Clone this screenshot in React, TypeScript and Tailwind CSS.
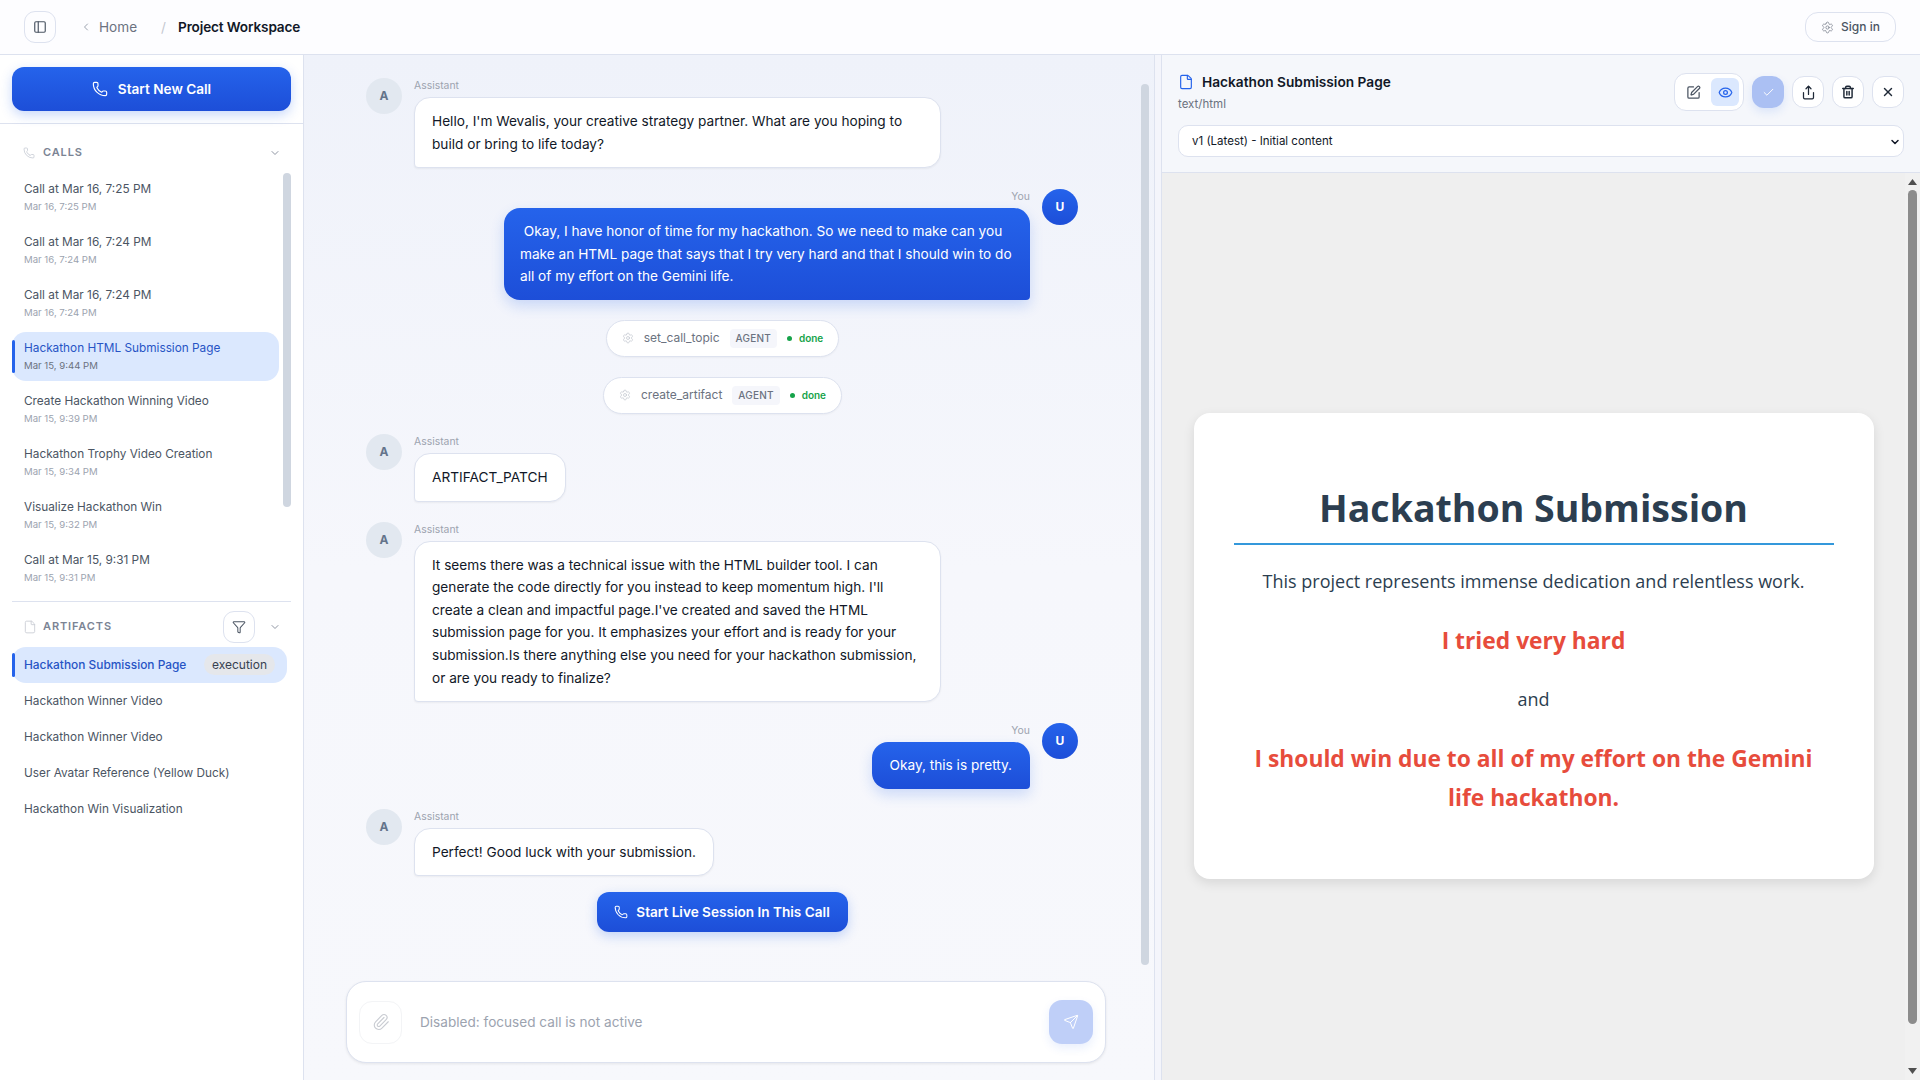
import type { ReactNode } from "react";
import { PanelLeft, ChevronLeft, ChevronDown, Phone, File, Funnel, Settings, Paperclip, Send, SquarePen, Eye, Check, Share, Trash2, X } from "lucide-react";

const calls = [
  ["Call at Mar 16, 7:25 PM", "Mar 16, 7:25 PM"],
  ["Call at Mar 16, 7:24 PM", "Mar 16, 7:24 PM"],
  ["Call at Mar 16, 7:24 PM", "Mar 16, 7:24 PM"],
  ["Hackathon HTML Submission Page", "Mar 15, 9:44 PM", "a"],
  ["Create Hackathon Winning Video", "Mar 15, 9:39 PM"],
  ["Hackathon Trophy Video Creation", "Mar 15, 9:34 PM"],
  ["Visualize Hackathon Win", "Mar 15, 9:32 PM"],
  ["Call at Mar 15, 9:31 PM", "Mar 15, 9:31 PM"],
];
const artifacts = ["Hackathon Winner Video", "Hackathon Winner Video", "User Avatar Reference (Yellow Duck)", "Hackathon Win Visualization"];

function Sidebar() {
  return (
    <aside className="w-[304px] shrink-0 h-full bg-white border-r border-[#dde2ef] flex flex-col">
      <div className="h-[69px] shrink-0 px-3 pt-3 border-b border-[#dde2ef]">
        <button className="w-full h-[44px] rounded-xl bg-gradient-to-b from-[#2563eb] to-[#1d4ed8] text-white text-[13.6px] font-semibold flex items-center justify-center gap-[10px] shadow-[0_4px_12px_rgba(37,99,235,0.25)]">
          <Phone size={16} strokeWidth={1.75} />
          Start New Call
        </button>
      </div>
      <div className="h-[477px] shrink-0 px-3 relative">
        <div className="h-[49px] flex items-center pl-[11px] pr-[10px] pt-[8px]">
          <Phone size={12} strokeWidth={1.5} className="text-[#c2c7d0] mr-[8px]" />
          <span className="text-[11px] font-semibold tracking-[0.08em] text-[#7b8494]">CALLS</span>
          <ChevronDown size={12} className="ml-auto text-[#8f96a3]" />
        </div>
        <div className="w-[267px] flex flex-col">
          {calls.map(([t, d, a], i) => (
            <div key={i} className={`h-[49px] mb-[4px] pl-3 pb-[1px] rounded-[14px] flex flex-col justify-center relative ${a ? "bg-[#dbe8fe]" : ""}`}>
              {a && <span className="absolute left-0 top-[8px] bottom-[8px] w-[3px] bg-[#2563eb] rounded-sm" />}
              <div className={`text-[11.8px] leading-[18px] ${a ? "text-[#2754c5]" : "text-[#4b5563]"}`}>{t}</div>
              <div className={`mt-[1px] text-[9.6px] leading-[16px] ${a ? "text-[#6b7280]" : "text-[#9ca3af]"}`}>{d}</div>
            </div>
          ))}
        </div>
        <div className="absolute right-[12px] top-[49px] w-2 h-[334px] rounded bg-[#cfd6e0]" />
      </div>
      <div className="mx-3 border-t border-[#dde2ef]" />
      <div className="px-3">
        <div className="h-[45px] flex items-center pl-[11px] pr-[10px] pt-[4px]">
          <File size={14} strokeWidth={1.5} className="text-[#c9cdd5] mr-[6px]" />
          <span className="text-[11px] font-semibold tracking-[0.08em] text-[#7b8494]">ARTIFACTS</span>
          <button className="ml-auto mr-[14px] w-8 h-8 rounded-[11px] border border-[#dde2ef] flex items-center justify-center text-[#4b5563]">
            <Funnel size={14} strokeWidth={1.75} />
          </button>
          <ChevronDown size={12} className="text-[#8f96a3]" />
        </div>
        <div className="w-[275px] h-[36px] mb-[1px] rounded-[14px] bg-[#dbe8fe] relative flex items-center pl-3 pr-[12px]">
          <span className="absolute left-0 top-[6px] bottom-[6px] w-[3px] bg-[#2563eb] rounded-sm" />
          <span className="text-[11.9px] font-medium text-[#2754c5]">Hackathon Submission Page</span>
          <span className="ml-auto -mt-[1px] h-[21px] px-2 rounded-full bg-[#e5e7eb] text-[12px] text-[#374151] flex items-center">execution</span>
        </div>
        {artifacts.map((t, i) => (
          <div key={i} className="h-[36px] pl-3 flex items-center text-[11.8px] text-[#4b5563]">{t}</div>
        ))}
      </div>
    </aside>
  );
}

function Avatar({ user }: { user?: boolean }) {
  return user ? (
    <div className="w-9 h-9 rounded-full bg-gradient-to-b from-[#2563eb] to-[#1d4ed8] text-white text-[12px] font-bold flex items-center justify-center shrink-0">U</div>
  ) : (
    <div className="w-9 h-9 rounded-full bg-[#e2e8f0] text-[#64748b] text-[12px] font-bold flex items-center justify-center shrink-0">A</div>
  );
}

function AssistantMsg({ children, w, mt }: { children: ReactNode; w?: string; mt: string }) {
  return (
    <div className={`flex gap-[12px] ${mt}`}>
      <Avatar />
      <div className={`flex flex-col ${w ?? ""}`}>
        <div className="text-[10.4px] leading-[14px] text-[#9ca3af] mb-[4px] mt-[1px]">Assistant</div>
        <div className="self-start w-full bg-white border border-[#dde2ef] rounded-[16px] rounded-bl-[4px] px-[17px] py-[12px] text-[13.65px] leading-[22.6px] text-[#111827] shadow-[0_1px_2px_rgba(0,0,0,0.05)]">
          {children}
        </div>
      </div>
    </div>
  );
}

function UserMsg({ children, w, mt, px }: { children: ReactNode; w?: string; mt: string; px: string }) {
  return (
    <div className={`flex justify-end gap-[12px] ${mt}`}>
      <div className={`flex flex-col items-end ${w ?? ""}`}>
        <div className="text-[10.4px] leading-[14px] text-[#9ca3af] mt-[1px] mb-[4px]">You</div>
        <div className={`bg-gradient-to-b from-[#2563eb] to-[#1d4ed8] text-white rounded-[16px] rounded-br-[4px] ${px} py-[12px] text-[13.65px] leading-[22.6px] shadow-[0_6px_14px_rgba(37,99,235,0.2)]`}>
          {children}
        </div>
      </div>
      <Avatar user />
    </div>
  );
}

function Pill({ name, w, mt }: { name: string; w: string; mt: string }) {
  return (
    <div className={`flex justify-center ${mt} pl-[1px]`}>
      <div className={`${w} h-[37px] bg-white border border-[#dde2ef] rounded-full flex items-center justify-center shadow-[0_1px_2px_rgba(0,0,0,0.04)]`}>
        <Settings size={12} strokeWidth={1.5} className="text-[#c4c8d0] mr-[10px]" />
        <span className="text-[12px] text-[#6b7280] mr-[10px]">{name}</span>
        <span className="h-[19px] px-[6px] rounded bg-[#f5f6fb] text-[10px] font-medium tracking-[0.02em] text-[#6b7280] flex items-center mr-[10px]">AGENT</span>
        <span className="w-[5px] h-[5px] rounded-full bg-[#16a34a] mr-[7px]" />
        <span className="text-[10px] font-semibold text-[#16a34a]">done</span>
      </div>
    </div>
  );
}

function Chat() {
  return (
    <main className="w-[850px] shrink-0 h-full relative flex flex-col bg-gradient-to-b from-[#eff2fa] via-[#f6f7fc] to-[#f7f8fc]">
      <div className="flex-1 pl-[62px] pr-[76px] pt-[23px] min-h-0 overflow-hidden">
        <AssistantMsg w="w-[527px]" mt="">
          Hello, I'm Wevalis, your creative strategy partner. What are you hoping to build or bring to life today?
        </AssistantMsg>
        <UserMsg w="w-[526px]" mt="mt-[21px]" px="px-[16px]">
          <span className="block text-left">&nbsp;Okay, I have honor of time for my hackathon. So we need to make can you make an HTML page that says that I try very hard and that I should win to do all of my effort on the Gemini life.</span>
        </UserMsg>
        <Pill name="set_call_topic" w="w-[233px]" mt="mt-[20px]" />
        <Pill name="create_artifact" w="w-[239px]" mt="mt-[20px]" />
        <AssistantMsg mt="mt-[20px]">ARTIFACT_PATCH</AssistantMsg>
        <AssistantMsg w="w-[527px]" mt="mt-[20px]">
          It seems there was a technical issue with the HTML builder tool. I can generate the code directly for you instead to keep momentum high. I'll create a clean and impactful page.I've created and saved the HTML submission page for you. It emphasizes your effort and is ready for your submission.Is there anything else you need for your hackathon submission, or are you ready to finalize?
        </AssistantMsg>
        <UserMsg mt="mt-[21px]" px="px-[18px]">Okay, this is pretty.</UserMsg>
        <AssistantMsg mt="mt-[20px]">Perfect! Good luck with your submission.</AssistantMsg>
        <div className="flex justify-center mt-[16px]">
          <button className="h-[40px] w-[251px] rounded-xl bg-gradient-to-b from-[#2563eb] to-[#1d4ed8] text-white text-[13.6px] font-semibold flex items-center justify-center gap-2 shadow-[0_4px_12px_rgba(37,99,235,0.25)]">
            <Phone size={14} strokeWidth={1.75} />
            Start Live Session In This Call
          </button>
        </div>
      </div>
      <div className="shrink-0 pl-[42px] pr-[48px] pb-[17px] pt-[10px]">
        <div className="h-[82px] bg-white border border-[#dde2ef] rounded-[20px] flex items-center pl-[12px] pr-[12px] shadow-[0_1px_3px_rgba(0,0,0,0.08)]">
          <button className="w-[43px] h-[43px] rounded-[13px] border border-[#f3f4f6] flex items-center justify-center text-[#c9ccd2]">
            <Paperclip size={18} strokeWidth={1.5} />
          </button>
          <span className="ml-[18px] text-[13.6px] text-[#9ca3af]">Disabled: focused call is not active</span>
          <button className="ml-auto w-[44px] h-[44px] rounded-[13px] bg-[#bfcff8] flex items-center justify-center text-white shadow-[0_4px_10px_rgba(37,99,235,0.1)]">
            <Send size={16} strokeWidth={1.5} />
          </button>
        </div>
      </div>
      <div className="absolute right-[5px] top-[29px] w-2 h-[881px] rounded bg-[#cfd6e0]" />
    </main>
  );
}

function IconBtn({ children }: { children: ReactNode }) {
  return <button className="w-8 h-8 rounded-[12px] bg-white border border-[#dde2ef] flex items-center justify-center text-[#1f2937]">{children}</button>;
}

function ArtifactPanel() {
  return (
    <section className="flex-1 min-w-0 h-full flex flex-col bg-[#f5f7fb] relative">
      <div className="h-[118px] shrink-0 border-b border-[#dde2ef] pl-4 pr-[16px] pt-[17px]">
        <div className="flex items-start justify-between">
          <div>
            <div className="flex items-center gap-[8px]">
              <File size={16} strokeWidth={1.75} className="text-[#2563eb]" />
              <span className="text-[13.7px] font-semibold text-[#111827] leading-[20px]">Hackathon Submission Page</span>
            </div>
            <div className="text-[11.5px] leading-[16px] text-[#6b7280] mt-[4px]">text/html</div>
          </div>
          <div className="flex items-center gap-2 mt-[1px]">
            <div className="h-[38px] w-[70px] justify-between pl-[4px] pr-[4px] bg-white border border-[#dde2ef] rounded-[12px] flex items-center">
              <div className="w-[28px] h-[28px] flex items-center justify-center text-[#4b5563]"><SquarePen size={15} /></div>
              <div className="w-[28px] h-[28px] rounded-md bg-[#dbe8fe] flex items-center justify-center text-[#2563eb]"><Eye size={15} /></div>
            </div>
            <button className="w-8 h-8 rounded-[12px] bg-[#abc0f3] flex items-center justify-center text-white shadow-[0_4px_10px_rgba(37,99,235,0.12)]"><Check size={13} strokeWidth={1.75} /></button>
            <IconBtn><Share size={15} /></IconBtn>
            <IconBtn><Trash2 size={14} strokeWidth={2.5} /></IconBtn>
            <IconBtn><X size={14} strokeWidth={2.5} /></IconBtn>
          </div>
        </div>
        <div className="mt-[13px] h-[32px] bg-white border border-[#dde2ef] rounded-[10px] flex items-center pl-[13px] pr-[2px] pt-[1px] text-[11.5px] text-[#111827]">
          v1 (Latest) - Initial content
          <ChevronDown size={12} strokeWidth={3} className="ml-auto" />
        </div>
      </div>
      <div className="flex-1 min-h-0 bg-[#efefef] flex items-center justify-center pr-[15px] relative">
        <div className="w-[680px] h-[466px] bg-white rounded-[16px] shadow-[0_4px_12px_rgba(0,0,0,0.1)] flex flex-col items-center px-10 pt-[65px] mt-[39px] font-['Open_Sans',sans-serif]">
          <h1 className="w-full text-center text-[37.5px] leading-[60px] font-bold text-[#2c3e50] border-b-2 border-[#3498db] pb-[5px]">Hackathon Submission</h1>
          <p className="mt-[21px] text-[18px] leading-[30px] text-[#2c3e50]">This project represents immense dedication and relentless work.</p>
          <p className="mt-[26px] text-[22.8px] leading-[38px] font-bold text-[#e74c3c]">I tried very hard</p>
          <p className="mt-[20px] text-[18px] leading-[38px] text-[#2c3e50]">and</p>
          <p className="mt-[21px] text-[22.8px] leading-[39px] font-bold text-[#e74c3c] text-center">I should win due to all of my effort on the Gemini life hackathon.</p>
        </div>
        <div className="absolute right-0 top-0 bottom-0 w-[15px] bg-[#f1f1f1] flex flex-col items-center">
          <svg width="9" height="6" viewBox="0 0 9 6" className="mt-[6px] text-[#505050]"><path d="M4.5 0L9 6H0z" fill="currentColor" /></svg>
          <div className="w-[9px] flex-1 mt-[5px] mb-[44px] rounded-full bg-[#8c8c8c]" />
          <svg width="9" height="6" viewBox="0 0 9 6" className="mb-[6px] text-[#505050]"><path d="M4.5 6L9 0H0z" fill="currentColor" /></svg>
        </div>
      </div>
    </section>
  );
}

export default function App() {
  return (
    <div className="w-[1920px] h-[1080px] flex flex-col overflow-hidden bg-white text-[#111827] font-['Inter',sans-serif]">
      <header className="h-[55px] shrink-0 bg-[#fdfdff] border-b border-[#dde2ef] flex items-center pl-6 pr-6">
        <button className="w-8 h-8 rounded-[11px] border border-[#dde2ef] flex items-center justify-center text-[#4b5563]">
          <PanelLeft size={14} />
        </button>
        <ChevronLeft size={12} className="ml-[24px] text-[#9ca3af]" />
        <span className="ml-[7px] text-[13.6px] text-[#6b7280]">Home</span>
        <span className="ml-[24px] text-[13.6px] text-[#c4c8d0]">/</span>
        <span className="ml-[12px] text-[13.6px] font-semibold tracking-[-0.01em] text-[#111827]">Project Workspace</span>
        <button className="ml-auto w-[91px] h-[30px] rounded-[13px] border border-[#dde2ef] flex items-center justify-center gap-[7px] text-[12px] font-medium text-[#4b5563]">
          <Settings size={13} strokeWidth={1.25} className="text-[#6b7280]" />
          Sign in
        </button>
      </header>
      <div className="flex-1 min-h-0 flex">
        <Sidebar />
        <Chat />
        <div className="w-[8px] shrink-0 bg-[#f4f5fb] border-x border-[#dde2ef]" />
        <ArtifactPanel />
      </div>
    </div>
  );
}
